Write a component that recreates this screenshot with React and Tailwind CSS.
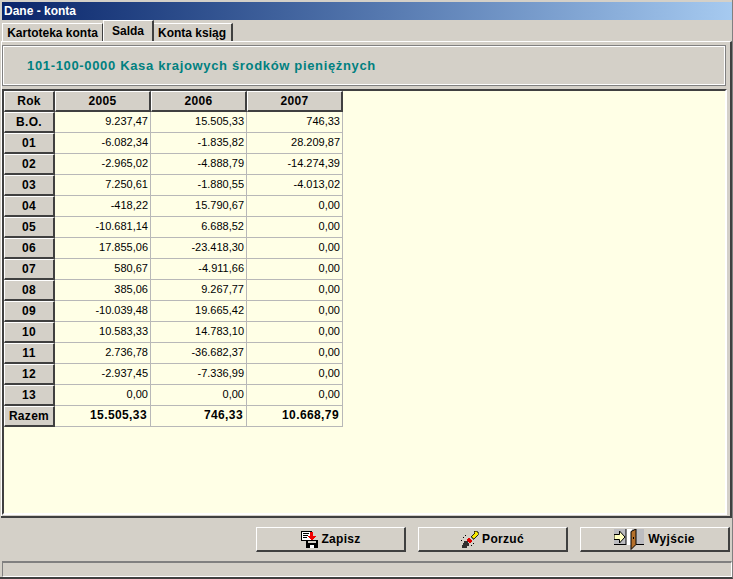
const ROWS = [
  ['B.O.', '9.237,47', '15.505,33', '746,33'],
  ['01', '-6.082,34', '-1.835,82', '28.209,87'],
  ['02', '-2.965,02', '-4.888,79', '-14.274,39'],
  ['03', '7.250,61', '-1.880,55', '-4.013,02'],
  ['04', '-418,22', '15.790,67', '0,00'],
  ['05', '-10.681,14', '6.688,52', '0,00'],
  ['06', '17.855,06', '-23.418,30', '0,00'],
  ['07', '580,67', '-4.911,66', '0,00'],
  ['08', '385,06', '9.267,77', '0,00'],
  ['09', '-10.039,48', '19.665,42', '0,00'],
  ['10', '10.583,33', '14.783,10', '0,00'],
  ['11', '2.736,78', '-36.682,37', '0,00'],
  ['12', '-2.937,45', '-7.336,99', '0,00'],
  ['13', '0,00', '0,00', '0,00'],
]

const raised = 'border-t border-l border-t-white border-l-white border-r-2 border-b-2 border-r-[#404040] border-b-[#404040]'

function HeadCell({ children, w }) {
  return (
    <div className={`${w} h-[21px] shrink-0 flex items-center justify-center pb-[1px] bg-[#d4d0c8] font-bold text-[12px] tracking-[0.3px] text-black ${raised}`}>
      {children}
    </div>
  )
}

function Cell({ children, bold }) {
  return (
    <div className={`w-[96px] h-[21px] shrink-0 flex items-center justify-end pb-[2px] border-r border-b border-[#b8b8b8] text-black ${bold ? 'font-bold text-[12px] tracking-[0.4px] pr-[3px]' : 'text-[11px] pr-[2px]'}`}>
      {children}
    </div>
  )
}

function SaveIcon() {
  return (
    <svg width="18" height="17" viewBox="0 0 18 17" shapeRendering="crispEdges">
      <path d="M1 0h10v9H1z" fill="#fff" stroke="#000" strokeWidth="1" />
      <path d="M3 2h6M3 4h5M3 6h4" stroke="#000" strokeWidth="1" />
      <path d="M10 1h3v4h3l-4 5-4-5h2z" fill="#f00000" />
      <path d="M6 9h12v8H6z" fill="#000" />
      <path d="M8 10h8v2H8z" fill="#d4d0c8" />
      <path d="M10 14h4v3h-4z" fill="#fff" />
    </svg>
  )
}

function CancelIcon() {
  return (
    <svg width="18" height="19" viewBox="0 0 18 19" shapeRendering="crispEdges">
      <path d="M13 1h3v1h1v3h-1v1h-1v1h-1v1h-1v1h-1V8h-1V7h-1V6h1V5h1V4h1V3h1z" fill="#f8e800" stroke="#000" strokeWidth="0.6" />
      <path d="M7 8h2v1h1v1h1v2h-1v1H8v-1H7v-1H6V9h1z" fill="#e00000" />
      <path d="M3 11h4v2h1v3H6v2H1v-3h1v-2h1z" fill="#303030" />
      <path d="M2 7h1v1H2zM4 5h1v1H4zM0 10h1v1H0zM10 15h1v1h-1zM12 13h1v1h-1z" fill="#000" />
    </svg>
  )
}

function ExitIcon() {
  return (
    <svg width="30" height="21" viewBox="0 0 30 21" className="shrink-0">
      <path d="M0 0h30v15H0z" fill="#bcbcc0" />
      <path d="M0 15h13v1H0zM18 15h12v1H18z" fill="#000" />
      <path d="M12 0h6v16h-6z" fill="#fff" />
      <path d="M11.500 0h1v16h-1z" fill="#000" />
      <path d="M0 5.500h5.500v-3.500l5.500 6-5.500 6v-3.500H0z" fill="#ffffc0" stroke="#000" strokeWidth="1" />
      <path d="M17 2.500l5-2.500v15.500l-5 5z" fill="#b5702a" stroke="#000" strokeWidth="1" />
      <path d="M19 8h1v2h-1z" fill="#000" />
    </svg>
  )
}

function Button({ icon, label, gap }) {
  return (
    <button className={`w-[150px] h-[25px] flex items-center justify-center ${gap} bg-[#d4d0c8] font-bold text-[12px] tracking-[0.3px] text-black ${raised}`}>
      {icon}
      <span>{label}</span>
    </button>
  )
}

export default function App() {
  return (
    <div className="w-[733px] h-[579px] flex flex-col overflow-hidden bg-[#d4d0c8] font-['Liberation_Sans',Arial,sans-serif] pt-[2px] pl-[1px] border-r border-b-2 border-r-[#808080] border-b-[#404040]">
      {/* Title bar */}
      <div className="h-[18px] shrink-0 ml-[1px] flex items-center pl-[2px] bg-gradient-to-r from-[#0a246a] to-[#a6caf0] text-white font-bold text-[12px]">
        Dane - konta
      </div>

      {/* Tabs */}
      <div className="h-[21px] shrink-0 flex items-end pl-[1px] text-[12px] font-bold text-black">
        <div className="w-[101px] h-[18px] flex items-center justify-center border-t border-l border-white border-r border-r-[#404040]">Kartoteka konta</div>
        <div className="w-[51px] h-[21px] -mr-[1px] flex items-start pt-[1px] justify-center border-t border-l border-white border-r-2 border-r-[#404040] bg-[#d4d0c8] relative">Salda</div>
        <div className="w-[80px] h-[18px] flex items-center justify-center border-t border-white border-r-2 border-r-[#404040]">Konta ksiąg</div>
      </div>

      {/* Page */}
      <div className="h-[475px] shrink-0 flex flex-col border-t border-l border-white border-r-2 border-r-[#404040] pt-[3px] pr-[3px]">
        <div className="h-[41px] shrink-0 mr-[1px] flex items-center pl-[24px] border border-[#808080] shadow-[inset_0_0_0_1px_#ffffff] text-[#008080] font-bold text-[13px] tracking-[0.66px]">
          101-100-0000 Kasa krajowych środków pieniężnych
        </div>

        {/* Grid */}
        <div className="flex-1 mt-[3px] mb-[1px] bg-[#ffffe6] border-t-2 border-l-2 border-t-[#404040] border-l-[#404040] border-r-2 border-b-2 border-r-white border-b-white">
          <div className="flex">
            <HeadCell w="w-[51px]">Rok</HeadCell>
            <HeadCell w="w-[96px]">2005</HeadCell>
            <HeadCell w="w-[96px]">2006</HeadCell>
            <HeadCell w="w-[96px]">2007</HeadCell>
          </div>
          {ROWS.map(r => (
            <div key={r[0]} className="flex">
              <HeadCell w="w-[51px]">{r[0]}</HeadCell>
              <Cell>{r[1]}</Cell>
              <Cell>{r[2]}</Cell>
              <Cell>{r[3]}</Cell>
            </div>
          ))}
          <div className="flex">
            <HeadCell w="w-[51px]">Razem</HeadCell>
            <Cell bold>15.505,33</Cell>
            <Cell bold>746,33</Cell>
            <Cell bold>10.668,79</Cell>
          </div>
        </div>
      </div>

      {/* Buttons */}
      <div className="h-[45px] shrink-0 flex items-center justify-end gap-[12px] pr-[2px] border-t-2 border-t-[#404040]">
        <Button icon={<SaveIcon />} label="Zapisz" gap="gap-[3px]" />
        <Button icon={<CancelIcon />} label="Porzuć" gap="gap-[3px]" />
        <Button icon={<ExitIcon />} label="Wyjście" gap="gap-[4px]" />
      </div>

      {/* Status bar */}
      <div className="h-[16px] shrink-0 ml-[1px] border-t-2 border-l border-t-[#808080] border-l-[#808080] border-r border-b border-r-white border-b-white" />
    </div>
  )
}
